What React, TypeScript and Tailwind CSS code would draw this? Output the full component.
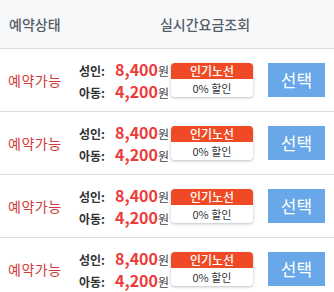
export default function App() {
  const rows = [1, 2, 3, 4];

  return (
    <div
      className="w-[334px] h-[292px] overflow-hidden bg-white"
      style={{ fontFamily: '"Noto Sans CJK KR", "Noto Sans", sans-serif' }}
    >
      <div className="flex items-center h-[49px] bg-[#f7f8fa] border-b border-[#dddddd]">
        <div className="w-[79px] pl-[9px] text-[14px] font-medium text-[#555d68]">예약상태</div>
        <div className="flex-1 text-center pr-[3px] text-[14px] font-medium text-[#555d68]">실시간요금조회</div>
      </div>
      {rows.map((r) => (
        <div key={r} className="flex items-center h-[63px] border-b border-[#dddddd]">
          <div className="w-[79px] pl-[8px] text-[14px] text-[#d13a3a] tracking-[0.5px]">예약가능</div>
          <div className="w-[92px] flex flex-col">
            <div className="flex items-baseline h-[22px] leading-[22px]">
              <span className="w-[36px] text-[12px] font-bold text-[#333333]">성인:</span>
              <span className="text-[16px] font-bold text-[#ee3a3a]">8,400</span>
              <span className="text-[12px] text-[#444444]">원</span>
            </div>
            <div className="flex items-baseline h-[22px] leading-[22px]">
              <span className="w-[36px] text-[12px] font-bold text-[#333333]">아동:</span>
              <span className="text-[16px] font-bold text-[#ee3a3a]">4,200</span>
              <span className="text-[12px] text-[#444444]">원</span>
            </div>
          </div>
          <div className="w-[82px] h-[34px] rounded-[4px] overflow-hidden bg-white shadow-[0_1px_3px_rgba(0,0,0,0.25)] flex flex-col">
            <div className="h-[16px] bg-[#ef4a25] text-white text-[12px] leading-[16px] text-center font-medium">인기노선</div>
            <div className="flex-1 text-[11px] leading-[18px] text-center text-[#333333]">0% 할인</div>
          </div>
          <div className="ml-[15px] w-[57px] h-[34px] bg-[#68a8e8] text-white text-[17px] flex items-center justify-center">선택</div>
        </div>
      ))}
    </div>
  );
}
